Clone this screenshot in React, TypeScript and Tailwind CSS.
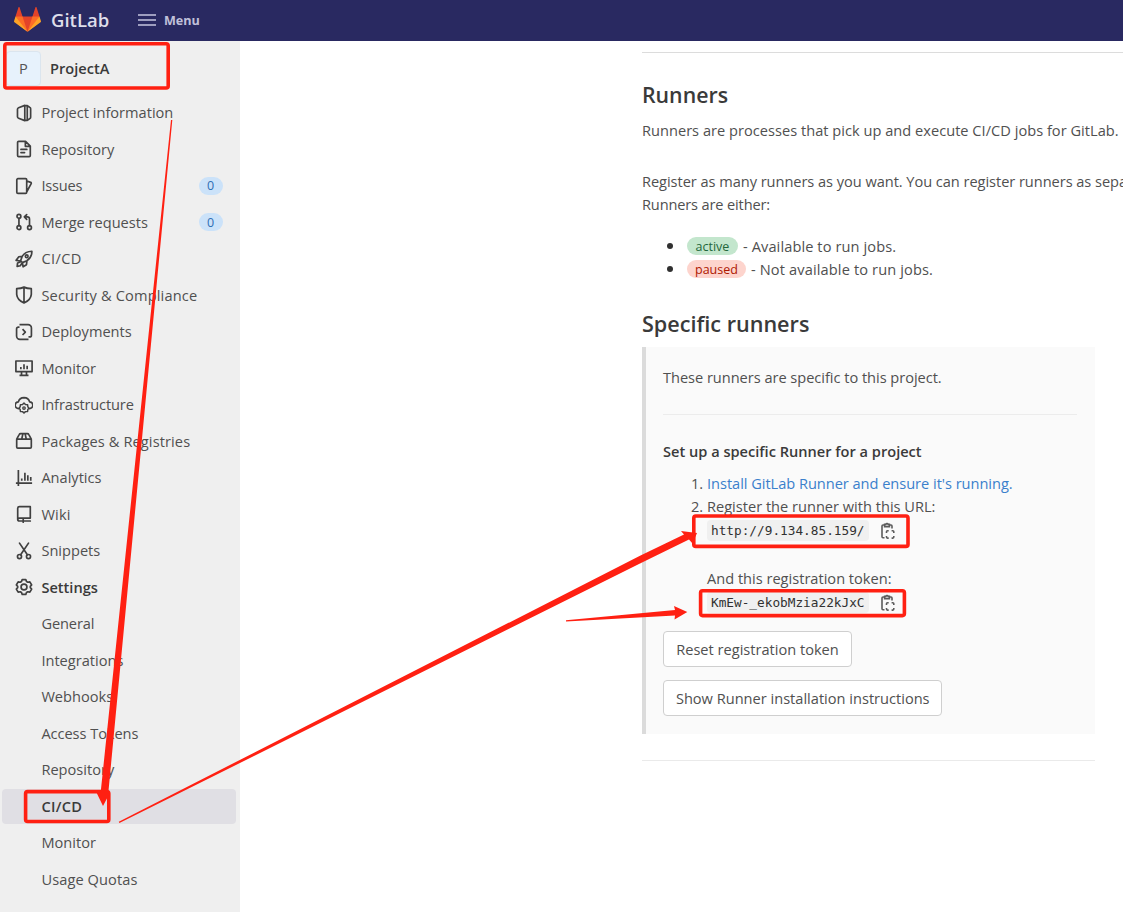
import type { ReactNode } from "react";

function Icon({ children }: { children: ReactNode }) {
  return (
    <svg viewBox="0 0 16 16" className="h-[18px] w-[18px] shrink-0" fill="none" stroke="#404040" strokeWidth="1.5" strokeLinejoin="round" strokeLinecap="round">
      {children}
    </svg>
  );
}

const icons: Record<string, ReactNode> = {
  project: <path d="M8.7 1.2 3.2 3.3Q2.2 3.7 2.2 4.6v6.8q0 .9 1 1.3l5.5 2.1zM8.9 1.5h2.1L13.2 3q.7.4.7 1.2v7.6q0 .8-.7 1.2L11 14.5H8.9M10.9 1.8v12.4" />,
  doc: <path d="M3.3 1.2h6.1l4.2 4.2v8.4a1 1 0 0 1-1 1H3.3a1 1 0 0 1-1-1V2.2a1 1 0 0 1 1-1zM9.2 1.4v4.2h4.2M5.3 8.4h5.2M5.3 11.2h3.2" />,
  issues: <path d="M2.6 1.5h6.8a1 1 0 0 1 1 1v11a1 1 0 0 1-1 1H2.6a1 1 0 0 1-1-1v-11a1 1 0 0 1 1-1zM10.6 3.5l3.3 1.3q.8.3.5 1.1l-3.8 7" />,
  merge: (
    <>
      <circle cx="3.5" cy="3" r="1.7" />
      <circle cx="3.5" cy="13" r="1.7" />
      <circle cx="12.9" cy="13" r="1.7" />
      <path d="M3.5 4.7v6.6M12.9 11.3V5.5a2 2 0 0 0-2-2H8.6M10.4 1.4 8.3 3.5l2.1 2.1" />
    </>
  ),
  rocket: (
    <>
      <path d="M5 9.6 6.3 5.9Q8.8 1.3 15 1.1q.1 5.5-4.5 8.5L6.6 11.2zM6.4 5.6l-3 .4L1 9.2l3.8.6M10.6 9.6l-.4 3.5-3 1.8-.6-3.6M4.6 10.6l-2.3.9-.4 3 2.8-.5 1.3-2" />
      <circle cx="10.4" cy="5.5" r="1.2" />
    </>
  ),
  shield: <path d="M8 1Q5.5 2.2 1.5 2.4v5Q1.9 12.3 8 15.1 14.1 12.3 14.5 7.4v-5Q10.5 2.2 8 1zM8 1.4v13.4" />,
  deploy: <path strokeLinecap="butt" d="M4 1.5h7.6a3 3 0 0 1 3 3v6.3a1.6 1.6 0 0 1-1.6 1.6h-1M12 14.6H4.4a3 3 0 0 1-3-3V5.3A1.6 1.6 0 0 1 3 3.7h1M6.7 5.5l2.5 2.6-2.5 2.6" />,
  monitor: <path strokeLinecap="butt" d="M.8 1.8h14.4v9.4H.8zM4 14.5h8M5.8 11.4v3M10.2 11.4v3M5.2 9V7.2M8 9V4.6M10.8 9V6" />,
  cloud: (
    <>
      <path d="M3.2 11.2A3 3 0 0 1 3 5.2Q4 1.5 8 1.4q4 .1 5 3.8a3 3 0 0 1-.2 6" />
      <path d="M8 6.3 9.3 7.6l1.9.1.2 1.8 1 1.3-1 1.2-.2 1.7-1.9.2L8 15.2l-1.3-1.3-1.9-.2-.2-1.7-1-1.2 1-1.3.2-1.8 1.9-.1z" strokeWidth="1.3" />
      <circle cx="8" cy="10.7" r="1.1" strokeWidth="1.2" />
    </>
  ),
  package: <path d="M1.5 6.4v7a1 1 0 0 0 1 1h11a1 1 0 0 0 1-1v-7zM1.5 6.3l2.2-4q.4-.8 1.3-.8h6q.9 0 1.3.8l2.2 4M7 1.7 6 6.2M9 1.7l1 4.5" />,
  chart: <path strokeLinecap="butt" d="M3 .8V15M.8 12.6h14.4M6 10.5V8.4M8.8 10.5V3.4M11.4 10.5V5.6M14 10.5V7" />,
  book: <path d="M13.6 11.6V1.5H4A1.6 1.6 0 0 0 2.4 3v9.6A1.6 1.6 0 0 0 4 14.2h2.6M13.6 11.6H4a1.5 1.5 0 0 0-1.5 1.2M13.6 14.2H7.6M7.3 11.8v3.6" />,
  scissors: (
    <>
      <circle cx="4" cy="12.9" r="1.8" />
      <circle cx="12" cy="12.9" r="1.8" />
      <path d="M4 1 11 11.4M12 1 5 11.4" />
    </>
  ),
  gear: (
    <>
      <path d="M6.4 1.4h3.2l.6 1.7 1.2.7 1.8-.4 1.6 2.8-1.2 1.3v1l1.2 1.3-1.6 2.8-1.8-.4-1.2.7-.6 1.7H6.4l-.6-1.7-1.2-.7-1.8.4-1.6-2.8 1.2-1.3v-1L1.2 6.2l1.6-2.8 1.8.4 1.2-.7z" />
      <circle cx="8" cy="8" r="2.6" />
    </>
  ),
};

type NavItem = { label: string; icon?: string; count?: number; bold?: boolean; active?: boolean; tracking?: string };

const nav: NavItem[] = [
  { label: "Project information", icon: "project" },
  { label: "Repository", icon: "doc" },
  { label: "Issues", icon: "issues", count: 0, tracking: "tracking-[-0.2px]" },
  { label: "Merge requests", icon: "merge", count: 0 },
  { label: "CI/CD", icon: "rocket", tracking: "tracking-[0.4px]" },
  { label: "Security & Compliance", icon: "shield", tracking: "tracking-[0.16px]" },
  { label: "Deployments", icon: "deploy" },
  { label: "Monitor", icon: "monitor" },
  { label: "Infrastructure", icon: "cloud", tracking: "tracking-[-0.15px]" },
  { label: "Packages & Registries", icon: "package", tracking: "tracking-[0.1px]" },
  { label: "Analytics", icon: "chart" },
  { label: "Wiki", icon: "book", tracking: "tracking-[0.2px]" },
  { label: "Snippets", icon: "scissors" },
  { label: "Settings", icon: "gear", bold: true },
  { label: "General", tracking: "tracking-[-0.1px]" },
  { label: "Integrations" },
  { label: "Webhooks" },
  { label: "Access Tokens", tracking: "tracking-[-0.05px]" },
  { label: "Repository" },
  { label: "CI/CD", bold: true, active: true, tracking: "tracking-[0.3px]" },
  { label: "Monitor" },
  { label: "Usage Quotas", tracking: "tracking-[0.1px]" },
];

function NavRow({ item }: { item: NavItem }) {
  return (
    <li className={`mb-[2px] flex h-[34.53px] w-[234px] items-center gap-[8.9px] rounded pl-[12.5px] pr-[13.5px] ${item.active ? "bg-[#e0dfe4]" : ""} ${item.bold ? "font-semibold text-[#3a3a3a]" : ""}`}>
      {item.icon ? <Icon>{icons[item.icon]}</Icon> : <span className="w-[18px]" />}
      <span className={`flex-1 ${item.tracking ?? ""}`}>{item.label}</span>
      {item.count !== undefined && (
        <span className="flex h-[18px] w-6 items-center justify-center rounded-full bg-[#cbe2f9] text-[12.5px] text-[#2f6fb5]">{item.count}</span>
      )}
    </li>
  );
}

function CopyIcon() {
  return (
    <svg viewBox="0 0 16 18" className="mt-[2px] h-[18px] w-4" fill="none" stroke="#5c5c5c" strokeWidth="1.6">
      <path d="M4.5 15.8H3a1 1 0 0 1-1-1V4a1 1 0 0 1 1-1h1.5M9.5 3H11a1 1 0 0 1 1 1v2.5" />
      <path d="M4.6 4.6V2.4h1.2a1.3 1.3 0 0 1 2.4 0h1.2v2.2z" />
      <path d="M6.5 11V9.8a1 1 0 0 1 1-1h1.2M11.6 8.8h1.2a1 1 0 0 1 1 1V11M13.8 13.9v1.2a1 1 0 0 1-1 1h-1.2M8.7 16.1H7.5a1 1 0 0 1-1-1v-1.2" />
    </svg>
  );
}

function CodeLine({ text }: { text: string }) {
  return (
    <div className="flex h-6 items-center gap-[11px]">
      <code className="flex h-[21px] w-[162px] items-center rounded bg-[#f0f0f0] pl-1 font-['DejaVu_Sans_Mono',monospace] text-[12.75px] text-[#303030]">{text}</code>
      <CopyIcon />
    </div>
  );
}

function Annotations() {
  return (
    <svg viewBox="0 0 1123 912" className="pointer-events-none absolute inset-0 h-[912px] w-[1123px]" fill="#ff2012">
      <g fill="none" stroke="#ff2012" strokeWidth="3.6">
        <rect x="4.8" y="43.8" width="163.4" height="44.2" rx="2" />
        <rect x="25.6" y="791.6" width="83.2" height="29.9" rx="2" />
        <rect x="693.8" y="516" width="214.2" height="30.4" rx="2" />
        <rect x="700.6" y="590.8" width="203.8" height="24.8" rx="2" />
      </g>
      <path d="M171 120h1.3L108.3 793h1.5L103 806 96.7 793h3.9z" />
      <path d="M118.8 821.7 640 555.8 684 534.5 681 531 697 533 692.5 543.5 689 539.5 640 563.5 119.4 823.1z" />
      <path d="M566 620.2 675 610 674 606 687.3 612 674.5 619.5 675 615.5 566 621.6z" />
    </svg>
  );
}

export default function App() {
  return (
    <div className="relative h-[912px] w-[1123px] overflow-hidden bg-white font-['Open_Sans','Noto_Sans',sans-serif] text-[14.6px] leading-[23px] text-[#505050]">
      <header className="flex h-[41.4px] items-center bg-[#292961] pb-[1.5px] pl-[14px] text-[#dcdcea]">
        <svg viewBox="0 0 36 36" className="h-[27px] w-[27px]">
          <path fill="#e24329" d="M2 14l9.38 9v-9l-4-12.28c-.205-.632-1.176-.632-1.38 0z" />
          <path fill="#e24329" d="M34 14l-9.38 9v-9l4-12.28c.205-.632 1.176-.632 1.38 0z" />
          <path fill="#e24329" d="M18 34.38 3 14h30z" />
          <path fill="#fc6d26" d="M18 34.38 11.38 14H2l4 11zM18 34.38 24.62 14H34l-4 11z" />
          <path fill="#fca326" d="M2 14 .1 20.16c-.18.565 0 1.2.5 1.56L18 34.38zM34 14l1.9 6.16c.18.565 0 1.2-.5 1.56L18 34.38z" />
        </svg>
        <span className="ml-[10px] w-[59px] text-[18.5px] font-semibold text-[#dedeea]">GitLab</span>
        <svg viewBox="0 0 18 12" className="ml-[28px] h-3 w-[18px]" stroke="#c5c5de" strokeWidth="1.5">
          <path d="M0 1h18M0 6h18M0 11h18" />
        </svg>
        <span className="ml-[8px] pt-px text-[12.6px] font-bold text-[#c0c0da]">Menu</span>
      </header>
      <div className="flex">
        <aside className="h-[871px] w-[240.4px] shrink-0 bg-[#efefef] pl-[2px]">
          <div className="flex h-[54px] items-center gap-[9px] pl-[4px]">
            <span className="flex h-[35px] w-[35px] items-center justify-center rounded border border-[#dbe5ee] bg-[#e7f2fc] text-[#555]">P</span>
            <span className="font-semibold text-[#3a3a3a]">ProjectA</span>
          </div>
          <ul>
            {nav.map((item, i) => (
              <NavRow key={i} item={item} />
            ))}
          </ul>
        </aside>
        <main className="ml-[401.6px] w-[481px] shrink-0 pt-[10.6px]">
          <hr className="border-t border-[#dcdcdc]" />
          <h2 className="mt-[27px] text-[21.3px] font-semibold leading-[30px] text-[#3a3a3a]">Runners</h2>
          <p className="mt-[9.5px] whitespace-nowrap tracking-[0.02px]">Runners are processes that pick up and execute CI/CD jobs for GitLab.</p>
          <p className="mt-[28px] whitespace-nowrap">
            <span className="tracking-[-0.045px]">Register as many runners as you want. You can register runners as sepa</span>
            <br />
            <span className="tracking-[-0.15px]">Runners are either:</span>
          </p>
          <ul className="mt-[18.5px]">
            <li className="flex h-[23px] items-center">
              <span className="ml-[25px] mr-[14px] h-[6px] w-[6px] rounded-full bg-[#303030]" />
              <span className="mr-[5px] flex h-[18px] w-[51px] items-center justify-center rounded-full bg-[#c3e6cd] text-[12.5px] text-[#24663b]">active</span>
              <span className="tracking-[0.1px]">- Available to run jobs.</span>
            </li>
            <li className="flex h-[23px] items-center">
              <span className="ml-[25px] mr-[14px] h-[6px] w-[6px] rounded-full bg-[#303030]" />
              <span className="mr-[5px] flex h-[18px] w-[59px] items-center justify-center rounded-full bg-[#fdd4cd] text-[12.5px] text-[#ae1800]">paused</span>
              <span className="tracking-[0.13px]">- Not available to run jobs.</span>
            </li>
          </ul>
          <h2 className="mt-[28px] text-[21.6px] font-semibold leading-[30px] text-[#3a3a3a]">Specific runners</h2>
          <section className="mt-[8.5px] h-[386.5px] w-[453px] border-l-[4px] border-[#dbdbdb] bg-[#fafafa] pl-[17px] pr-[18px] pt-[19px]">
            <p className="tracking-[-0.03px]">These runners are specific to this project.</p>
            <hr className="mt-[25px] border-[#ececec]" />
            <h3 className="mt-[25px] font-semibold text-[#3a3a3a]">Set up a specific Runner for a project</h3>
            <ol className="mt-[9px] pl-[28px]">
              <li className="flex">
                <span className="w-4">1.</span>
                <a className="tracking-[-0.03px] text-[#3a80cc]">Install GitLab Runner and ensure it's running.</a>
              </li>
              <li className="flex">
                <span className="w-4">2.</span>
                <div>
                  <p>Register the runner with this URL:</p>
                  <CodeLine text="http://9.134.85.159/" />
                  <p className="mt-[25px]">And this registration token:</p>
                  <CodeLine text="KmEw-_ekobMzia22kJxC" />
                </div>
              </li>
            </ol>
            <button className="mt-[17px] flex h-[36px] w-[189px] items-center justify-center rounded border-[1.5px] border-[#cfcfcf] bg-white">Reset registration token</button>
            <button className="mt-[13px] flex h-[36px] w-[279.5px] items-center justify-center rounded border-[1.5px] border-[#cfcfcf] bg-white">Show Runner installation instructions</button>
          </section>
          <hr className="mt-[26px] w-[453px] border-[#eaeaea]" />
        </main>
      </div>
      <Annotations />
    </div>
  );
}
